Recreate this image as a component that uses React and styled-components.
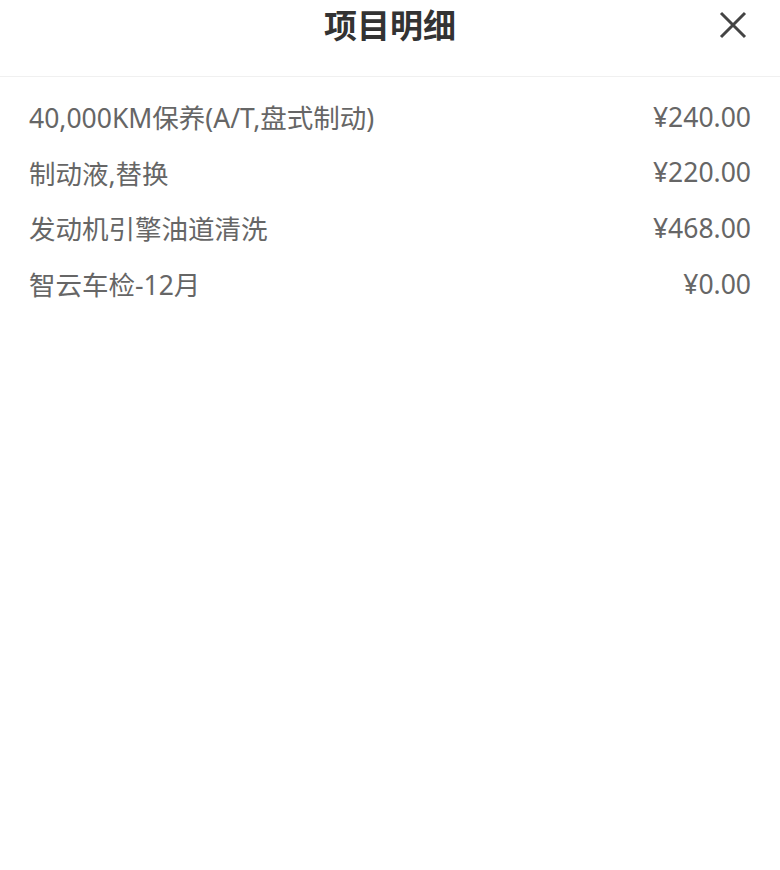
import React from "react";
import styled, { createGlobalStyle } from "styled-components";

const GlobalStyle = createGlobalStyle`
  html, body {
    margin: 0;
    padding: 0;
    background: #fff;
  }
  body {
    font-family: "Noto Sans", "Noto Sans CJK SC", sans-serif;
  }
`;

const Page = styled.div`
  width: 780px;
  min-height: 870px;
  background: #fff;
`;

const Header = styled.div`
  position: relative;
  height: 76px;
  border-bottom: 1px solid #f0f0f0;
  display: flex;
  justify-content: center;
  align-items: flex-start;
`;

const Title = styled.h1`
  margin: 0;
  font-family: "Noto Sans CJK SC", sans-serif;
  font-size: 33px;
  line-height: 48px;
  font-weight: 700;
  color: #333;
`;

const CloseButton = styled.button`
  position: absolute;
  top: 10px;
  right: 32px;
  width: 30px;
  height: 30px;
  padding: 0;
  border: none;
  background: none;
  display: flex;
  align-items: center;
  justify-content: center;
  cursor: pointer;
`;

const List = styled.div`
  padding: 12px 29px 0 29px;
  display: flex;
  flex-direction: column;
`;

const Row = styled.div`
  height: 55.6px;
  display: flex;
  align-items: center;
  justify-content: space-between;
  font-size: 26.5px;
  color: #666;
`;

const Name = styled.span``;

const Price = styled.span``;

const items = [
  { name: "40,000KM保养(A/T,盘式制动)", price: "¥240.00" },
  { name: "制动液,替换", price: "¥220.00" },
  { name: "发动机引擎油道清洗", price: "¥468.00" },
  { name: "智云车检-12月", price: "¥0.00" },
];

export default function App() {
  return (
    <Page>
      <GlobalStyle />
      <Header>
        <Title>项目明细</Title>
        <CloseButton aria-label="关闭">
          <svg width="28" height="28" viewBox="0 0 28 28">
            <path d="M2 2 L26 26 M26 2 L2 26" stroke="#444" strokeWidth="3" strokeLinecap="butt" />
          </svg>
        </CloseButton>
      </Header>
      <List>
        {items.map((it) => (
          <Row key={it.name}>
            <Name>{it.name}</Name>
            <Price>{it.price}</Price>
          </Row>
        ))}
      </List>
    </Page>
  );
}
